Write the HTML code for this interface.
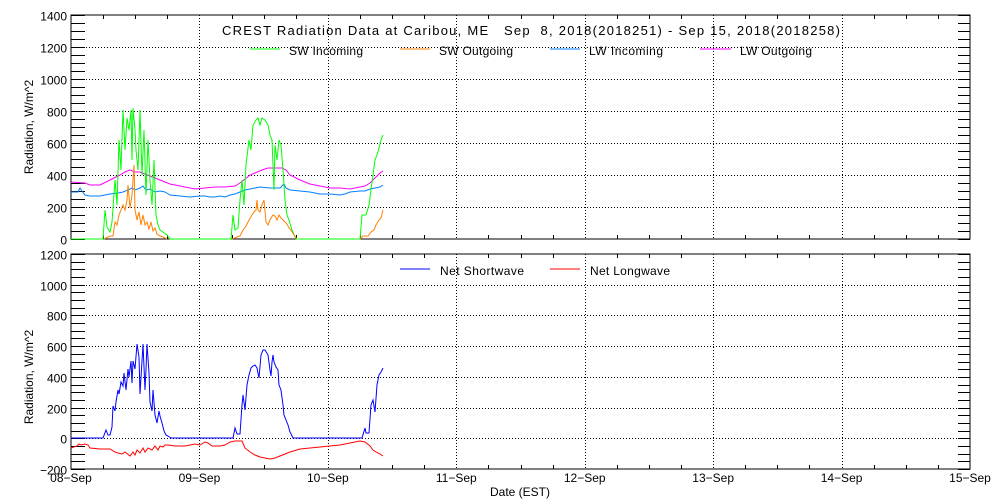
<!DOCTYPE html>
<html><head><meta charset="utf-8"><style>
html,body{margin:0;padding:0;background:#fff;}
svg{display:block;font-family:"Liberation Sans",sans-serif;}
text{font-size:12px;fill:#000;}
</style></head><body>
<svg id="s" width="1000" height="500" xmlns="http://www.w3.org/2000/svg" shape-rendering="crispEdges">
<rect width="1000" height="500" fill="#fff"/>
<g id="grid"></g>
<rect x="71" y="15" width="899" height="224" fill="none" stroke="#000"/>
<rect x="71" y="254" width="899" height="215" fill="none" stroke="#000"/>
<text x="222" y="35" textLength="618" lengthAdjust="spacing" style="font-size:13px;white-space:pre" xml:space="preserve">CREST Radiation Data at Caribou, ME   Sep  8, 2018(2018251) - Sep 15, 2018(2018258)</text>
<g stroke-width="1">
<line x1="250" y1="49" x2="280" y2="49" stroke="#00ff00"/><text x="289" y="55" textLength="74">SW Incoming</text>
<line x1="400" y1="49" x2="430" y2="49" stroke="#ff8000"/><text x="439" y="55" textLength="74">SW Outgoing</text>
<line x1="550" y1="49" x2="580" y2="49" stroke="#0080ff"/><text x="589" y="55" textLength="74">LW Incoming</text>
<line x1="700" y1="49" x2="731" y2="49" stroke="#ff00ff"/><text x="740" y="55" textLength="72">LW Outgoing</text>
<line x1="400" y1="269" x2="430" y2="269" stroke="#0000ff"/><text x="440" y="275" textLength="84">Net Shortwave</text>
<line x1="550" y1="269" x2="580" y2="269" stroke="#ff0000"/><text x="590" y="275" textLength="80">Net Longwave</text>
</g>
<text transform="translate(33,127) rotate(-90)" text-anchor="middle">Radiation, W/m^2</text>
<text transform="translate(33,377) rotate(-90)" text-anchor="middle">Radiation, W/m^2</text>
<text x="520" y="496" text-anchor="middle">Date (EST)</text>
<g id="labels"></g>
<g fill="none" stroke-width="1" shape-rendering="auto">
<polyline stroke="#ff00ff" points="71,182 85,183 90,185 100,185 110,180 120,175 125,172 130,170 135,172 140,172 145,174 150,176 160,180 170,184 180,186 195,189 205,188 215,187 225,187 235,186 240,183 245,179 250,175 255,173 262,170 268,168 275,168 282,168 286,170 290,175 300,180 310,184 320,186 330,188 340,188 350,189 360,187 365,186 370,183 375,178 380,173 383,171"/>
<polyline stroke="#0080ff" points="71,192 78,192 80,188 82,191 85,195 90,196 100,196 105,195 110,194 118,193 123,192 128,190 132,188 135,190 140,188 143,186 146,190 150,189 155,192 160,191 165,192 170,195 180,196 190,197 200,196 205,196 210,197 215,197 220,196 225,197 230,195 235,194 240,192 245,190 250,189 255,188 260,187 270,188 280,188 284,184 286,188 290,190 300,191 310,192 320,194 330,194 340,195 345,194 350,192 360,191 365,191 370,189 375,188 380,187 383,185"/>
<polyline stroke="#00ff00" points="71,239 103,239 105,210 107,227 110,232 112,222 115,180 117,205 119,140 121,170 123,110 125,150 127,118 129,130 131,110 132,160 133,108 135,130 136,150 138,170 140,110 142,175 144,130 146,195 148,140 150,180 152,205 154,160 156,215 158,225 160,230 163,232 167,235 170,239 231,239 233,215 235,230 238,228 240,200 242,180 244,205 246,165 249,140 251,150 253,125 256,120 258,118 260,125 262,118 265,120 268,125 270,135 272,140 274,190 275,145 277,160 279,140 281,145 283,170 285,200 287,215 289,220 292,230 296,239 360,239 362,215 366,215 369,205 371,190 373,175 375,160 377,155 379,148 381,140 383,135"/>
<polyline stroke="#ff8000" points="104,239 110,236 113,236 115,222 117,225 119,215 121,210 123,205 125,210 127,200 128,185 130,208 132,195 134,165 135,210 137,220 139,212 141,225 143,215 145,225 147,222 149,229 151,222 153,231 155,228 157,234 160,236 163,237 167,239"/>
<polyline stroke="#ff8000" points="232,239 240,236 243,230 246,226 249,220 252,215 254,212 256,210 257,200 258,210 260,212 262,205 264,200 266,222 268,225 270,220 273,215 275,216 277,220 279,215 281,218 283,220 285,222 287,224 289,228 291,230 294,235 297,239"/>
<polyline stroke="#ff8000" points="360,239 363,236 368,236 371,232 374,230 376,225 379,220 381,218 383,210"/>
<polyline stroke="#0000ff" points="71,438 103,438 106,430 108,435 110,435 112,427 113,406 115,411 116,402 118,390 119,394 121,382 123,386 124,373 126,390 128,369 129,377 131,361 132,383 133,361 135,369 137,344 139,357 140,394 142,361 143,344 145,390 146,369 147,344 149,373 150,402 152,411 153,390 155,415 157,423 159,411 160,416 162,423 164,431 166,435 168,436 171,438 233,438 235,428 237,434 240,434 242,405 243,395 245,410 247,385 249,375 251,368 253,366 255,365 257,368 259,378 261,355 263,350 265,350 268,355 270,370 271,376 272,362 273,355 274,362 276,367 278,370 279,385 281,390 283,405 284,415 286,420 288,425 290,432 293,438 362,438 365,428 366,433 369,433 371,405 373,400 375,412 377,385 379,375 381,372 383,368"/>
<polyline stroke="#ff0000" points="71,448 77,446 79,444 81,445 85,444 88,445 90,448 100,449 110,449 115,452 118,453 122,454 125,452 130,456 133,452 135,455 137,450 140,453 143,448 145,452 148,448 152,450 155,446 158,450 160,446 163,447 165,445 168,445 175,446 185,446 195,444 200,445 205,442 208,443 212,446 220,446 225,445 230,442 235,441 242,441 245,448 250,452 255,455 260,457 265,458 270,459 275,458 280,456 285,454 290,452 300,449 310,448 320,447 330,446 340,445 350,443 355,442 360,441 365,442 370,446 373,450 376,452 380,454 383,456"/>
</g>
</svg>
<script>
var NS="http://www.w3.org/2000/svg",g=document.getElementById("grid"),L=document.getElementById("labels");
function ln(x1,y1,x2,y2,dash){var e=document.createElementNS(NS,"line");e.setAttribute("x1",x1);e.setAttribute("y1",y1);e.setAttribute("x2",x2);e.setAttribute("y2",y2);e.setAttribute("stroke","#000");if(dash)e.setAttribute("stroke-dasharray","1 2");g.appendChild(e);}
function tx(x,y,s,a){var e=document.createElementNS(NS,"text");e.setAttribute("x",x);e.setAttribute("y",y);e.setAttribute("text-anchor",a);e.textContent=s;L.appendChild(e);}
var X0=71,X1=970,dd=(X1-X0)/7;
var P=[{t:15,b:239,min:0,max:1400},{t:254,b:469,min:-200,max:1200}];
P.forEach(function(p,pi){
 var sc=(p.b-p.t)/(p.max-p.min);
 for(var v=p.min;v<=p.max;v+=50){var y=Math.round(p.b-(v-p.min)*sc)+0.5;
  ln(X0,y,X0+14,y);ln(X1-12,y,X1,y);
  if(v%200==0){ if(v>p.min&&v<p.max) ln(X0,y,X1,y,true); tx(67,y+5,(v<0?"\u2212"+(-v):v),"end");}}
 for(var i=0;i<=28;i++){var x=Math.round(X0+i*dd/4)+0.5;
  if(i%4==0){ if(i>0&&i<28) ln(x,p.t,x,p.b,true);}
  else {ln(x,p.t,x,p.t+4);ln(x,p.b-4,x,p.b);}}
});
for(var d=0;d<=7;d++){tx(X0+d*dd,482,(d<2?"0":"")+(8+d)+"\u2212Sep","middle");}
</script>
</body></html>
